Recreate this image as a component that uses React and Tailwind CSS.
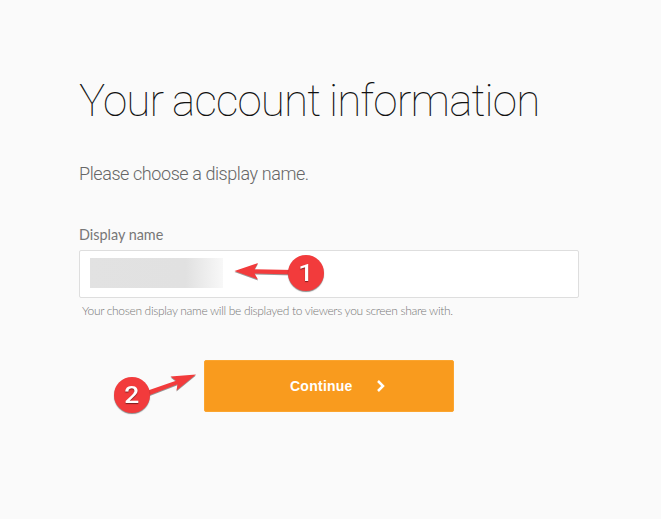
function Marker({ label, className }) {
  return (
    <span className={`absolute flex h-9 w-9 items-center justify-center rounded-full bg-[#f23b3c] font-['Roboto',sans-serif] text-[24px] leading-none font-medium text-white shadow-[0_1px_1px_rgba(0,0,0,0.45)] [text-shadow:0_1px_1px_rgba(0,0,0,0.5)] ${className}`}>
      <span className="scale-x-110">{label}</span>
    </span>
  );
}

export default function App() {
  return (
    <main className="h-[519px] w-[661px] overflow-hidden bg-[#fafafa] pt-[73px] pl-[79px]">
      <h1 className="h-14 font-['Roboto',sans-serif] text-[44px] leading-[56px] font-thin tracking-[-0.86px] whitespace-nowrap text-[#111] [word-spacing:-1px]">
        Your account information
      </h1>
      <p className="mt-[31px] h-7 font-['Roboto',sans-serif] text-[18px] leading-7 font-light tracking-[-0.42px] whitespace-nowrap text-[#666]">
        Please choose a display name.
      </p>
      <form className="mt-[37px] w-[500px]" onSubmit={(e) => e.preventDefault()}>
        <label className="block h-5 font-['Lato',sans-serif] text-[14.4px] leading-5 whitespace-nowrap text-[#777]">
          Display name
        </label>
        <div className="relative mt-[5px] flex h-12 items-center rounded-xs border border-[#dedede] bg-white pl-2.5">
          <div className="mb-0.5 h-[30px] w-[133px] bg-linear-to-r from-[#e2e2e2] via-[#e1e1e1] via-72% to-[#f8f8f8]" />
          <svg className="absolute top-[11px] left-[154px] drop-shadow-[0_1px_0.5px_rgba(0,0,0,0.4)]" width="60" height="20" fill="#f23b3c">
            <path d="M0.5 9 24 1 20.5 7.2 60 8v4.5L20.5 11.5 24 17.5Z" />
          </svg>
          <Marker label="1" className="top-1 left-[208px]" />
        </div>
        <p className="mt-1 h-[18px] pl-[3px] font-['Lato',sans-serif] text-[12px] leading-[18px] font-light tracking-[-0.33px] whitespace-nowrap text-[#777]">
          Your chosen display name will be displayed to viewers you screen share with.
        </p>
        <div className="relative mt-10 flex pl-[125px]">
          <button className="flex h-[52px] w-[250px] items-center rounded-xs border border-[#fba52f] bg-[#f99b1e] pl-[85px] font-['Liberation_Sans',Arial,sans-serif] text-[14px] font-bold tracking-[0.25px] text-white">
            Continue
            <svg className="ml-6" width="9" height="14" fill="none" stroke="#fff" strokeWidth="2.5">
              <path d="m1 2 5 5-5 5" />
            </svg>
          </button>
          <svg className="absolute top-[12px] left-[62px] drop-shadow-[0_1px_0.5px_rgba(0,0,0,0.4)]" width="56" height="28" fill="#f23b3c">
            <path d="M55 2.5 35.5 18.5 36.5 12.2 5 24.5 4 19.5 35 8.7 29.5 4.5Z" />
          </svg>
          <Marker label="2" className="top-[17px] left-[35px]" />
        </div>
      </form>
    </main>
  );
}
